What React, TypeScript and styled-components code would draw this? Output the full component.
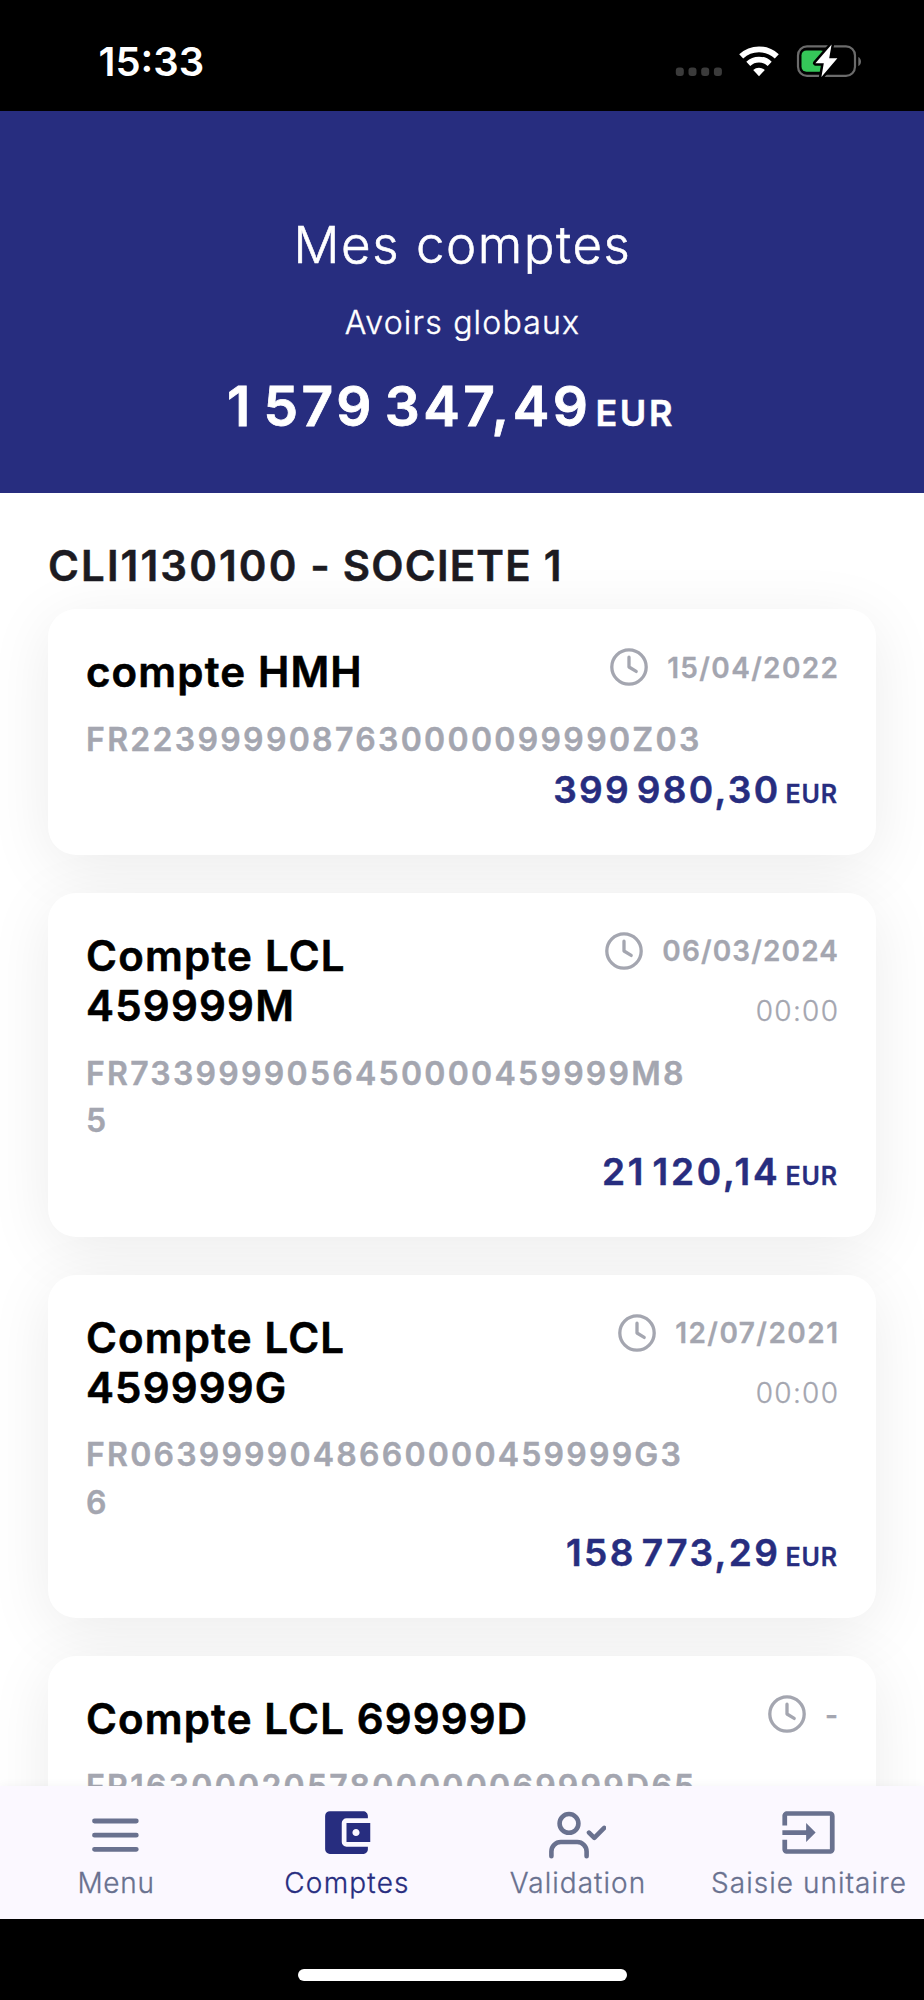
import React from 'react';
import styled, { createGlobalStyle } from 'styled-components';
import { MdAccountBalanceWallet, MdInput } from 'react-icons/md';

const navy = '#272d7f';
const muted = '#a4a6b0';
const slate = '#69718f';

const GlobalStyle = createGlobalStyle`
  *, *::before, *::after { box-sizing: border-box; }
  body { margin: 0; background: #000; }
`;

const Screen = styled.div`
  width: 924px;
  height: 2000px;
  display: flex;
  flex-direction: column;
  overflow: hidden;
  background: #000;
  font-family: Inter, 'Liberation Sans', sans-serif;
`;

const StatusBar = styled.div`
  flex: none;
  height: 111px;
  padding: 0 63px 0 98.5px;
  display: flex;
  justify-content: space-between;
  align-items: flex-start;
  color: #fff;
`;

const Clock = styled.div`
  margin-top: 38px;
  font-size: 40px;
  line-height: 48px;
  font-weight: 600;
`;

const StatusIcons = styled.svg`
  display: block;
  margin-top: 40px;
`;

const Header = styled.header`
  flex: none;
  height: 382px;
  padding-top: 104px;
  display: flex;
  flex-direction: column;
  align-items: center;
  background: ${navy};
  color: #fff;
`;

const Title = styled.h1`
  margin: 0;
  padding-left: 1px;
  font-size: 51px;
  line-height: 60px;
  font-weight: 300;
  letter-spacing: 1.55px;
  -webkit-text-stroke: 0.6px currentColor;
`;

const Subtitle = styled.div`
  margin-top: 28px;
  padding-left: 1px;
  font-size: 32px;
  line-height: 40px;
  font-weight: 300;
  letter-spacing: 1.2px;
  -webkit-text-stroke: 0.4px currentColor;
`;

const Total = styled.div`
  margin: 30px 22px 0 0;
  display: flex;
  align-items: baseline;
  font-size: 55px;
  line-height: 66px;
  font-weight: 600;
  letter-spacing: 3.5px;
  word-spacing: -7.6px;
  -webkit-text-stroke: 0.8px currentColor;
`;

const TotalCurrency = styled.span`
  margin-left: 4px;
  font-size: 36px;
  line-height: 1;
  letter-spacing: 2.6px;
  -webkit-text-stroke-width: 0.5px;
`;

const Content = styled.main`
  flex: 1;
  min-height: 0;
  overflow: hidden;
  padding: 48px 48px 0;
  background: #fff;
`;

const Company = styled.h2`
  margin: 0 0 18px;
  font-size: 42px;
  line-height: 50px;
  font-weight: 600;
  letter-spacing: 1.2px;
  color: #1c1b22;
  -webkit-text-stroke: 0.5px currentColor;
`;

const CompanyCode = styled.span`
  letter-spacing: 2.1px;
`;

const CardList = styled.div`
  display: flex;
  flex-direction: column;
  gap: 38px;
`;

const Card = styled.article`
  padding: 38px 38px 43px;
  border-radius: 28px;
  background: #fff;
  box-shadow: 0 12px 64px rgba(0, 0, 0, 0.078);
`;

const CardTop = styled.div`
  display: flex;
  justify-content: space-between;
  align-items: flex-start;
`;

const AccountName = styled.h3<{ $tracking: number }>`
  margin: 0;
  max-width: 450px;
  font-size: 42px;
  line-height: 50px;
  font-weight: 600;
  letter-spacing: ${(p) => p.$tracking}px;
  color: #000;
  -webkit-text-stroke: 0.6px currentColor;
`;

const Updated = styled.div`
  height: 0;
  margin-top: 1px;
  display: flex;
  flex-direction: column;
  align-items: flex-end;
  gap: 22px;
  color: ${muted};
`;

const DateRow = styled.div`
  display: flex;
  align-items: center;
  gap: 19px;
`;

const DateText = styled.span<{ $tracking: number }>`
  margin-right: ${(p) => -p.$tracking}px;
  padding-top: 1.5px;
  font-size: 28px;
  line-height: 36.5px;
  font-weight: 600;
  letter-spacing: ${(p) => p.$tracking}px;
  -webkit-text-stroke: 0.3px currentColor;
`;

const TimeText = styled.span`
  margin-right: -1.3px;
  font-size: 28px;
  line-height: 38px;
  font-weight: 300;
  letter-spacing: 1.3px;
  -webkit-text-stroke: 0.3px currentColor;
`;

const Iban = styled.div<{ $tracking: number }>`
  width: 619px;
  margin-top: 18.6px;
  font-size: 32px;
  line-height: 47.7px;
  font-weight: 600;
  letter-spacing: ${(p) => p.$tracking}px;
  word-break: break-all;
  color: ${muted};
  -webkit-text-stroke: 0.4px currentColor;
`;

const Amount = styled.div<{ $tracking: number }>`
  margin-top: 4.7px;
  display: flex;
  justify-content: flex-end;
  align-items: baseline;
  font-size: 37px;
  line-height: 44px;
  font-weight: 600;
  letter-spacing: ${(p) => p.$tracking}px;
  word-spacing: -6px;
  color: ${navy};
  -webkit-text-stroke: 0.5px currentColor;
`;

const Currency = styled.span`
  margin: 0 0 0 5px;
  font-size: 25px;
  line-height: 1;
  letter-spacing: 0.9px;
  -webkit-text-stroke-width: 0.3px;
`;

const TabBar = styled.nav`
  flex: none;
  height: 133px;
  padding-top: 18px;
  display: grid;
  grid-template-columns: repeat(4, 1fr);
  background: #fbf8ff;
  box-shadow: 0 -2px 8px rgba(0, 0, 0, 0.03);
  z-index: 1;
`;

const Tab = styled.div<{ $active?: boolean }>`
  display: flex;
  flex-direction: column;
  align-items: center;
  color: ${(p) => (p.$active ? navy : slate)};

  svg {
    display: block;
  }
`;

const TabLabel = styled.span<{ $tracking: number }>`
  margin-top: 3px;
  padding-left: 1px;
  font-size: 28px;
  line-height: 38px;
  font-weight: 300;
  letter-spacing: ${(p) => p.$tracking}px;
  white-space: nowrap;
  -webkit-text-stroke: 0.3px currentColor;
`;

const HomeArea = styled.div`
  flex: none;
  height: 81px;
  padding-top: 50px;
  display: flex;
  justify-content: center;
`;

const HomeIndicator = styled.div`
  width: 329px;
  height: 12px;
  border-radius: 6px;
  background: #fff;
`;

const ClockIcon = () => (
  <svg width="38" height="38" viewBox="0 0 38 38" fill="none" stroke="currentColor" strokeWidth="3.3" strokeLinecap="round" strokeLinejoin="round">
    <circle cx="19" cy="19" r="17.2" />
    <path d="M19 9.2V19l7.2 4.4" />
  </svg>
);

const MenuIcon = () => (
  <svg width="57" height="57" viewBox="0 0 57 57" fill="none" stroke="currentColor" strokeWidth="4.8" strokeLinecap="round">
    <path d="M7.5 17H49.3M7.5 31.2H49.3M7.5 45.3H49.3" />
  </svg>
);

const UserCheckIcon = () => (
  <svg width="57" height="57" viewBox="0 0 57 57" fill="none" stroke="currentColor" strokeWidth="4.6" strokeLinecap="round" strokeLinejoin="round">
    <circle cx="20" cy="19.4" r="9.4" />
    <path d="M2.4 52.2V47.4a9.4 9.4 0 0 1 9.4-9.4h16.4a9.4 9.4 0 0 1 9.4 9.4v4.8" />
    <path d="M40 28.6l5.3 5.2 9.9-9.9" />
  </svg>
);

interface Account {
  name: string;
  nameTracking: number;
  date: string;
  dateTracking: number;
  time?: string;
  iban: string;
  ibanTracking: number;
  amount?: string;
  amountTracking?: number;
}

const accounts: Account[] = [
  { name: 'compte HMH', nameTracking: 1.15, date: '15/04/2022', dateTracking: 1.36, iban: 'FR2239999087630000099990Z03', ibanTracking: 2.32, amount: '399\u00a0980,30', amountTracking: 2.35 },
  { name: 'Compte LCL 459999M', nameTracking: 1.22, date: '06/03/2024', dateTracking: 1.13, time: '00:00', iban: 'FR7339999056450000459999M85', ibanTracking: 2.26, amount: '21\u00a0120,14', amountTracking: 2.85 },
  { name: 'Compte LCL 459999G', nameTracking: 1.15, date: '12/07/2021', dateTracking: 1.45, time: '00:00', iban: 'FR0639999048660000459999G36', ibanTracking: 2.22, amount: '158\u00a0773,29', amountTracking: 2.45 },
  { name: 'Compte LCL 69999D', nameTracking: 1.14, date: '-', dateTracking: 1.4, iban: 'FR1630002057800000069999D65', ibanTracking: 2.25 },
];

export default function App() {
  return (
    <Screen>
      <GlobalStyle />
      <StatusBar>
        <Clock>15:33</Clock>
        <StatusIcons width="186" height="40" viewBox="675 40 186 40">
          {[675.8, 688.5, 701.2, 713.9].map((x) => (
            <rect key={x} x={x} y="67.6" width="8" height="8.4" rx="3" fill="#3b3b3b" />
          ))}
          <g fill="none" stroke="#fff" strokeWidth="5.8">
            <path d="M741.2 56.4a26 26 0 0 1 35.6 0" />
            <path d="M748.3 63.8a15.6 15.6 0 0 1 21.4 0" />
          </g>
          <path d="M759 76.2l-5.8-6.2a8.6 8.6 0 0 1 11.6 0z" fill="#fff" />
          <rect x="798" y="46.4" width="57" height="29.4" rx="9" fill="none" stroke="#6b6b6b" strokeWidth="2.2" />
          <path d="M858.3 57c3.6 1.6 3.6 7.6 0 9.2z" fill="#6b6b6b" />
          <rect x="801.5" y="50.4" width="24" height="21.4" rx="5" fill="#35c759" />
          <path d="M831.6 44.6l-16.2 18.6h8.4l-2.4 13.8 16-18.8h-8.2z" fill="#fff" stroke="#000" strokeWidth="5" paintOrder="stroke" strokeLinejoin="round" />
        </StatusIcons>
      </StatusBar>

      <Header>
        <Title>Mes comptes</Title>
        <Subtitle>Avoirs globaux</Subtitle>
        <Total>
          {'1\u00a0579\u00a0347,49'}
          <TotalCurrency>EUR</TotalCurrency>
        </Total>
      </Header>

      <Content>
        <Company>
          <CompanyCode>CLI1130100</CompanyCode> - SOCIETE 1
        </Company>
        <CardList>
          {accounts.map((a) => (
            <Card key={a.iban}>
              <CardTop>
                <AccountName $tracking={a.nameTracking}>{a.name}</AccountName>
                <Updated>
                  <DateRow>
                    <ClockIcon />
                    <DateText $tracking={a.dateTracking}>{a.date}</DateText>
                  </DateRow>
                  {a.time && <TimeText>{a.time}</TimeText>}
                </Updated>
              </CardTop>
              <Iban $tracking={a.ibanTracking}>{a.iban}</Iban>
              {a.amount && (
                <Amount $tracking={a.amountTracking ?? 2.4}>
                  {a.amount}
                  <Currency>EUR</Currency>
                </Amount>
              )}
            </Card>
          ))}
        </CardList>
      </Content>

      <TabBar>
        <Tab>
          <MenuIcon />
          <TabLabel $tracking={0.7}>Menu</TabLabel>
        </Tab>
        <Tab $active>
          <MdAccountBalanceWallet size={57} />
          <TabLabel $tracking={1.2}>Comptes</TabLabel>
        </Tab>
        <Tab>
          <UserCheckIcon />
          <TabLabel $tracking={1.04}>Validation</TabLabel>
        </Tab>
        <Tab>
          <MdInput size={57} />
          <TabLabel $tracking={1.03}>Saisie unitaire</TabLabel>
        </Tab>
      </TabBar>
      <HomeArea>
        <HomeIndicator />
      </HomeArea>
    </Screen>
  );
}
